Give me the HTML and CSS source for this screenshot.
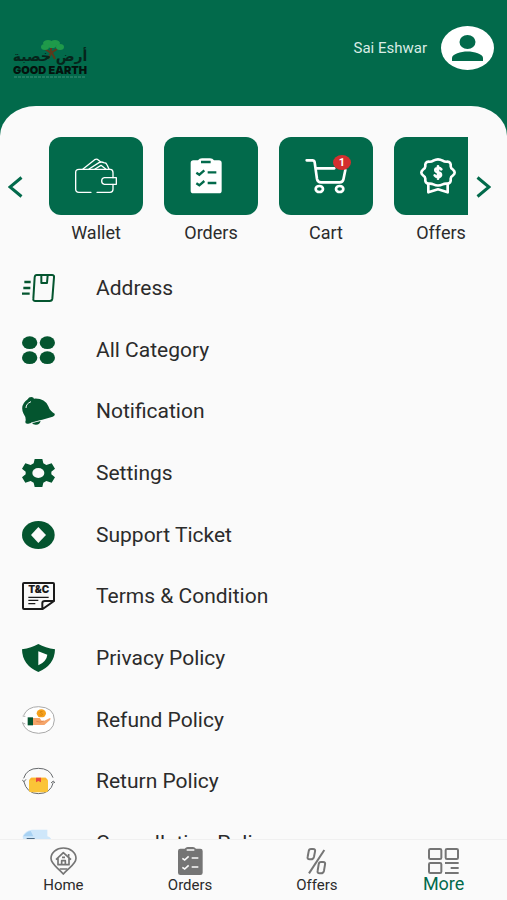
FILE: index.html
```html
<!DOCTYPE html>
<html lang="en">
<head>
    <meta charset="UTF-8">
    <meta name="viewport" content="width=device-width, initial-scale=1.0">
    <title>More</title>
    <link rel="stylesheet" href="styles.css">
</head>
<body>
    <!-- Header -->
    <header class="header">
        <svg class="logo" viewBox="0 0 72 38" role="img" aria-label="Good Earth">
            <path d="M34 19 L37 13 L31 9 M37 13 L43 9 M37 13 V6 M38 13 L41 19" stroke="#5b3a1c" stroke-width="2" fill="none"/>
            <g fill="#1f9a4a">
                <ellipse cx="31" cy="7" rx="4" ry="3"/>
                <ellipse cx="34" cy="3" rx="5" ry="3"/>
                <ellipse cx="41" cy="3" rx="5" ry="3"/>
                <ellipse cx="46" cy="7" rx="4" ry="3"/>
                <ellipse cx="38" cy="6" rx="4" ry="2"/>
            </g>
            <text class="logo-arabic" x="36" y="21" text-anchor="middle">أرض خصبة</text>
            <text class="logo-name" x="36" y="34" text-anchor="middle">GOOD EARTH</text>
            <path d="M0 37 H72" stroke="#3f8f78" stroke-width="1" stroke-dasharray="3 1"/>
        </svg>
        <div class="user">
            <span class="user-name">Sai Eshwar</span>
            <svg class="avatar" viewBox="0 0 53 44">
                <ellipse cx="26.5" cy="22" rx="26.5" ry="22" fill="#fff"/>
                <ellipse cx="26.5" cy="16" rx="8" ry="7" fill="#026a4b"/>
                <path d="M11 35 V32 C11 28 20 25.500 26.500 25.500 S42 28 42 32 V35 Z" fill="#026a4b"/>
            </svg>
        </div>
    </header>

    <main class="content">
        <!-- Shortcut carousel -->
        <section class="shortcuts">
            <button class="arrow" type="button" aria-label="Previous">
                <svg viewBox="0 0 15 22"><path d="M13.500 1.500 L2 11 L13.500 20.500"/></svg>
            </button>
            <div class="track">
                <a class="shortcut" href="#">
                    <span class="tile">
                        <svg viewBox="0 0 126 108" class="line-icon thin">
                            <path d="M48 103 H12 Q2 103 2 94 V43 Q2 34 12 34 H106 Q114 34 114 44 V59 M114 79 V94 Q114 103 105 103 H66"/>
                            <path d="M88 59 H124 V79 H88 Q80 78 80 69 Q80 60 88 59 Z"/>
                            <path d="M24 33 L59 5 Q65 1 70 6 L77 12 M42 33 L72 14 Q80 10 86 14 Q94 14 96 20 L102 33 M60 33 L78 22 L92 33"/>
                        </svg>
                    </span>
                    <span class="shortcut-label">Wallet</span>
                </a>
                <a class="shortcut" href="#">
                    <span class="tile">
                        <svg viewBox="0 0 126 108">
                            <path d="M10 7 H24 Q28 1 36 1 H60 Q68 1 72 7 H87 Q95 7 95 15 V98 Q95 106 87 106 H10 Q2 106 2 98 V15 Q2 7 10 7 Z" fill="#fff"/>
                            <path d="M33 12 H62 M53 43 H79 M53 75 H79 M19 44 L28 50 L43 37 M19 76 L28 82 L43 69" class="cut"/>
                        </svg>
                    </span>
                    <span class="shortcut-label">Orders</span>
                </a>
                <a class="shortcut" href="#">
                    <span class="tile">
                        <svg viewBox="0 0 126 108" class="line-icon">
                            <path d="M5 7 H22 Q28 7 29 13 L36 63 Q38 73 48 73 H104 Q113 73 115 65 L121 36 M33 31 H88"/>
                            <ellipse cx="43" cy="93" rx="11" ry="9"/>
                            <ellipse cx="104" cy="93" rx="11" ry="9"/>
                        </svg>
                        <span class="badge">1</span>
                    </span>
                    <span class="shortcut-label">Cart</span>
                </a>
                <a class="shortcut" href="#">
                    <span class="tile">
                        <svg viewBox="0 0 126 108" class="line-icon">
                            <path d="M40 8 Q54 0 68 8 Q74 12 82 11 Q94 12 92 25 Q92 31 99 35 Q109 43 99 52 Q92 56 92 62 Q94 76 82 77 Q74 76 68 79 Q54 86 40 79 Q34 76 26 77 Q14 76 16 62 Q16 56 9 52 Q-1 43 9 35 Q16 31 16 25 Q14 12 26 11 Q34 12 40 8 Z"/>
                            <path d="M25 79 V103 L54 94 L83 103 V79"/>
                            <path d="M64 34 Q60 29 53 30 Q45 31 46 37 Q47 42 54 43 Q63 44 63 51 Q62 57 54 57 Q47 57 44 52 M54 25 V62"/>
                        </svg>
                    </span>
                    <span class="shortcut-label">Offers</span>
                </a>
            </div>
            <button class="arrow arrow-next" type="button" aria-label="Next">
                <svg viewBox="0 0 15 22"><path d="M1.500 1.500 L13 11 L1.500 20.500"/></svg>
            </button>
        </section>

        <!-- Menu -->
        <nav class="menu">
            <a class="menu-item" href="#">
                <svg viewBox="0 0 99 84">
                    <g fill="none" stroke="#04552f" stroke-width="6" stroke-linejoin="round">
                        <path d="M44 3 H90 Q97 3 96 10 L91 74 Q90 81 83 81 H40 Q33 81 34 74 L38 10 Q39 3 44 3 Z"/>
                        <path d="M58 4 V27 H75 L77 4"/>
                        <path d="M7 24 H26 M4 42 H25 M0 59 H23" stroke-width="7"/>
                    </g>
                </svg>
                <span>Address</span>
            </a>
            <a class="menu-item" href="#">
                <svg viewBox="0 0 99 84" fill="#04552f">
                    <ellipse cx="23" cy="20" rx="23" ry="19"/>
                    <ellipse cx="76" cy="20" rx="23" ry="19"/>
                    <ellipse cx="23" cy="65" rx="23" ry="19"/>
                    <ellipse cx="76" cy="65" rx="23" ry="19"/>
                </svg>
                <span>All Category</span>
            </a>
            <a class="menu-item" href="#">
                <svg viewBox="0 0 99 84" fill="#04552f">
                    <path d="M17 7 Q20 0 28 0 Q35 1 36 5 Q68 3 79 28 Q84 43 98 50 Q100 57 92 59 L19 80 Q9 82 10 74 Q14 64 4 49 Q-7 24 17 7 Z"/>
                    <path d="M30 78 L56 71 Q53 84 41 83 Q33 83 30 78 Z"/>
                    <path d="M12 33 Q12 20 27 14" fill="none" stroke="#fafafa" stroke-width="3"/>
                    <path d="M27 78 L58 70" stroke="#fafafa" stroke-width="2"/>
                </svg>
                <span>Notification</span>
            </a>
            <a class="menu-item" href="#">
                <svg viewBox="0 0 99 84">
                    <path d="M38 0 H61 L64 13 L73 18 L89 13 L99 29 L88 38 V46 L99 55 L89 71 L73 66 L64 71 L61 84 H38 L35 71 L26 66 L10 71 L0 55 L11 46 V38 L0 29 L10 13 L26 18 L35 13 Z" fill="#04552f"/>
                    <ellipse cx="49" cy="42" rx="18" ry="15" fill="#fafafa"/>
                </svg>
                <span>Settings</span>
            </a>
            <a class="menu-item" href="#">
                <svg viewBox="0 0 99 84">
                    <ellipse cx="49" cy="42" rx="49" ry="42" fill="#04552f"/>
                    <path d="M49 18 L72 42 L49 66 L27 42 Z" fill="#fafafa"/>
                </svg>
                <span>Support Ticket</span>
            </a>
            <a class="menu-item" href="#">
                <svg viewBox="0 0 99 84">
                    <path d="M6 3 H93 Q96 3 96 6 V57 L62 81 H6 Q3 81 3 78 V6 Q3 3 6 3 Z M61 80 V63 Q61 57 69 57 H95" fill="none" stroke="#1b1b1b" stroke-width="6"/>
                    <path d="M19 46 H80 M19 55 H49 M19 65 H40" stroke="#1b1b1b" stroke-width="4"/>
                    <text class="tc-text" x="50" y="34" text-anchor="middle">T&amp;C</text>
                </svg>
                <span>Terms &amp; Condition</span>
            </a>
            <a class="menu-item" href="#">
                <svg viewBox="0 0 99 84">
                    <path d="M49 0 Q70 12 99 16 Q98 64 49 84 Q1 64 0 16 Q29 12 49 0 Z" fill="#04552f"/>
                    <path d="M49 22 L76 32 Q74 52 49 64 Z" fill="#fff"/>
                </svg>
                <span>Privacy Policy</span>
            </a>
            <a class="menu-item" href="#">
                <svg viewBox="0 0 99 84">
                    <path d="M5 28 Q16 2 50 2 Q97 4 97 42 Q95 80 50 82 Q12 80 2 52" fill="#fff" stroke="#a9a9a9" stroke-width="3"/>
                    <path d="M0 50 L10 54 M2 30 L10 31" stroke="#a9a9a9" stroke-width="3"/>
                    <path d="M33 36 H53 L59 44 H67 L84 36 Q88 38 84 42 L67 57 H33 Z" fill="#f5a56b"/>
                    <path d="M43 46 Q55 51 65 45" fill="none" stroke="#d9783b" stroke-width="2"/>
                    <path d="M17 34 H33 V58 H17 Z" fill="#04552f"/>
                    <ellipse cx="58" cy="22" rx="14" ry="12" fill="#f5a11c"/>
                    <path d="M62 17 Q54 14 54 19 Q62 22 62 26 Q57 30 53 26" fill="none" stroke="#d07a08" stroke-width="2"/>
                </svg>
                <span>Refund Policy</span>
            </a>
            <a class="menu-item" href="#">
                <svg viewBox="0 0 99 84">
                    <path d="M5 34 Q14 4 49 4 Q84 4 93 32 M94 46 Q86 80 49 80 Q14 80 5 42" fill="none" stroke="#66696c" stroke-width="3"/>
                    <path d="M0 38 L6 44 L12 37 M87 48 L94 42 L99 48" fill="none" stroke="#66696c" stroke-width="3"/>
                    <path d="M27 32 H71 L78 40 V70 Q78 76 71 76 H28 Q21 76 21 70 V40 Z" fill="#fbc437"/>
                    <path d="M22 40 L28 32 H71 L77 40 Z" fill="#fdb52a"/>
                    <path d="M42 32 H57 V46 L49 42 L42 46 Z" fill="#e8483f"/>
                </svg>
                <span>Return Policy</span>
            </a>
            <a class="menu-item" href="#">
                <svg viewBox="0 0 99 84">
                    <path d="M2 22 Q10 4 30 2 H76 V22 Q90 26 90 40 V80 H8 Z" fill="#cfe7fa"/>
                    <path d="M4 22 Q12 8 26 6 L34 22 Z" fill="#a8d2f3"/>
                    <path d="M14 29 H38" stroke="#4a6a86" stroke-width="4"/>
                </svg>
                <span>Cancellation Policy</span>
            </a>
        </nav>
    </main>

    <!-- Navigation Bar -->
    <nav class="navbar">
        <a href="#">
            <svg viewBox="0 0 81 84" fill="none" stroke="#757575" stroke-width="5" stroke-linejoin="round">
                <path d="M40 3 C62 3 78 17 78 34 C78 52 57 61 40 81 C23 61 3 52 3 34 C3 17 19 3 40 3 Z"/>
                <path d="M18 38 L40 17 L63 38 M24 34 V53 H57 V34 M29 66 H52"/>
                <path d="M35 53 V41 H46 V53 M56 21 V29 M36 31 H45"/>
            </svg>
            <span>Home</span>
        </a>
        <a href="#">
            <svg viewBox="0 0 81 84">
                <path d="M10 5 H23 Q27 0 32 0 H48 Q53 0 57 5 H70 Q77 5 77 12 V77 Q77 84 70 84 H10 Q3 84 3 77 V12 Q3 5 10 5 Z" fill="#757575"/>
                <path d="M29 9 H52 M44 33 H64 M44 60 H64 M16 34 L23 39 L35 28 M16 61 L23 66 L35 55" fill="none" stroke="#fafafa" stroke-width="5"/>
            </svg>
            <span>Orders</span>
        </a>
        <a href="#">
            <svg viewBox="0 0 81 84" fill="none" stroke="#757575" stroke-width="6">
                <path d="M64 9 L18 79"/>
                <path d="M24 6 H30 Q38 6 36 14 L33 29 Q31 37 24 37 H20 Q12 37 14 29 L17 13 Q18 6 24 6 Z"/>
                <path d="M54 45 H60 Q68 45 66 53 L63 71 Q61 79 54 79 H50 Q42 79 44 71 L47 52 Q48 45 54 45 Z"/>
            </svg>
            <span>Offers</span>
        </a>
        <a href="#" class="active">
            <svg viewBox="0 0 93 84" fill="none" stroke="#757575" stroke-width="6">
                <rect x="3" y="6" width="37" height="30" rx="4"/>
                <rect x="53" y="6" width="37" height="30" rx="4"/>
                <rect x="3" y="48" width="37" height="30" rx="4"/>
                <path d="M51 48 H92 M68 63 H92 M51 78 H92"/>
            </svg>
            <span>More</span>
        </a>
    </nav>
</body>
</html>
```
FILE: styles.css
```css
* {
    box-sizing: border-box;
}

body {
    display: flex;
    flex-direction: column;
    height: 100vh;
    margin: 0;
    background-color: #026a4b;
    color: #2b2b2b;
    font-family: Roboto, "Noto Sans", sans-serif;
}

a {
    color: inherit;
    text-decoration: none;
}

/* Header */
.header {
    display: flex;
    justify-content: space-between;
    align-items: flex-start;
    padding: 26px 13px 28px 14px;
}

.logo {
    width: 72px;
    height: 38px;
    margin-top: 14px;
    overflow: visible;
}

.logo-arabic {
    font-family: "DejaVu Sans", sans-serif;
    font-size: 14px;
    font-weight: bold;
    fill: #06251b;
}

.logo-name {
    font-family: Inter, sans-serif;
    font-size: 11px;
    font-weight: 900;
    fill: #04130e;
}

.user {
    display: flex;
    align-items: center;
    gap: 14px;
}

.user-name {
    color: #d9ece5;
    font-size: 15px;
}

.avatar {
    width: 53px;
    height: 44px;
}

/* Content */
.content {
    flex: 1;
    min-height: 0;
    overflow-y: auto;
    scrollbar-width: none;
    background-color: #fafafa;
    border-radius: 36px 36px 0 0 / 30px 30px 0 0;
}

.shortcuts {
    display: flex;
    align-items: center;
    padding: 31px 0 12px;
}

.arrow {
    display: flex;
    width: 49px;
    padding: 0 0 8px 8px;
    border: 0;
    background: none;
    cursor: pointer;
}

.arrow-next {
    width: 39px;
}

.arrow svg {
    width: 15px;
    height: 22px;
    fill: none;
    stroke: #026a4b;
    stroke-width: 3;
}

.track {
    display: flex;
    flex: 1;
    gap: 21px;
    min-width: 0;
    overflow: hidden;
}

.shortcut {
    flex: none;
    width: 94px;
    text-align: center;
}

.tile {
    position: relative;
    display: flex;
    justify-content: center;
    align-items: center;
    height: 78px;
    border-radius: 12px;
    background-color: #026a4b;
}

.tile svg {
    width: 42px;
    height: 36px;
    overflow: visible;
}

.line-icon {
    fill: none;
    stroke: #fff;
    stroke-width: 8;
    stroke-linecap: round;
    stroke-linejoin: round;
}

.line-icon.thin {
    stroke-width: 4;
}

.cut {
    fill: none;
    stroke: #026a4b;
    stroke-width: 7;
}

.badge {
    position: absolute;
    top: 18px;
    left: 54px;
    width: 18px;
    height: 15px;
    border-radius: 50%;
    background-color: #d32f2f;
    color: #fff;
    font-size: 11px;
    font-weight: bold;
    line-height: 15px;
}

.shortcut-label {
    display: block;
    margin-top: 6px;
    font-size: 18px;
    line-height: 24px;
}

/* Menu */
.menu {
    display: grid;
    grid-template-rows: repeat(10, 1fr);
    height: 617px;
}

.menu-item {
    display: flex;
    align-items: center;
    gap: 41px;
    padding: 0 22px;
    font-size: 21px;
}

.menu-item svg {
    flex: none;
    width: 33px;
    height: 28px;
}

.tc-text {
    font-family: Inter, sans-serif;
    font-size: 30px;
    font-weight: 900;
    fill: #1b1b1b;
}

/* Navigation Bar */
.navbar {
    display: flex;
    height: 61px;
    border-top: 1px solid #f0f0f0;
    background-color: #fafafa;
}

.navbar a {
    display: flex;
    flex: 1;
    flex-direction: column;
    align-items: center;
    padding-top: 7px;
    font-size: 15px;
    line-height: 20px;
}

.navbar svg {
    width: 31px;
    height: 28px;
}

.navbar .active span {
    color: #026a4b;
    font-size: 18px;
    line-height: 18px;
}
```
